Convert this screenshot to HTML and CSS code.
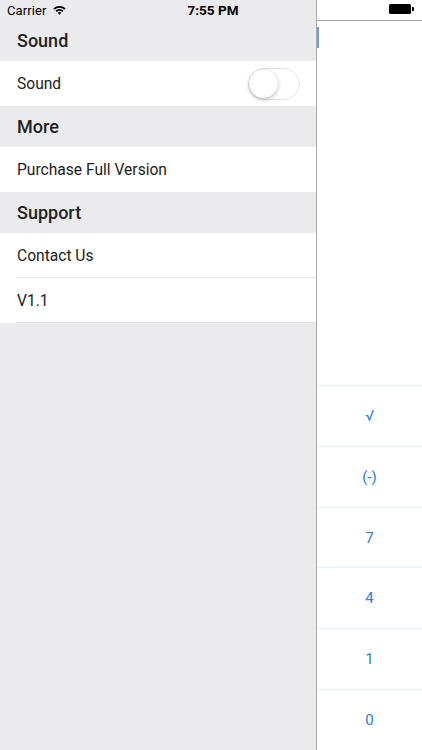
FILE: index.html
```html
<!DOCTYPE html>
<html>
<head>
<meta charset="utf-8">
<link rel="stylesheet" href="styles.css">
</head>
<body>
<div class="screen">
  <aside class="drawer">
    <div class="status-left">
      <span class="carrier">Carrier</span>
      <svg class="wifi" width="13" height="10" viewBox="0 0 13 10">
        <path d="M0.3 3.4 A9 9 0 0 1 12.7 3.4 L11.5 4.7 A7.3 7.3 0 0 0 1.5 4.7 Z" fill="#000"/>
        <path d="M2.5 5.6 A6 6 0 0 1 10.5 5.6 L9.3 6.9 A4.3 4.3 0 0 0 3.7 6.9 Z" fill="#000"/>
        <path d="M4.7 7.8 A2.9 2.9 0 0 1 8.3 7.8 L6.5 9.8 Z" fill="#000"/>
      </svg>
    </div>
    <div class="section-header">Sound</div>
    <div class="row">
      <span>Sound</span>
      <span class="toggle"><span class="knob"></span></span>
    </div>
    <div class="section-header">More</div>
    <div class="row"><span>Purchase Full Version</span></div>
    <div class="section-header">Support</div>
    <div class="row sep"><span>Contact Us</span></div>
    <div class="row sep"><span>V1.1</span></div>
  </aside>
  <main class="main">
    <div class="status-right">
      <span class="battery"><span class="nub"></span></span>
    </div>
    <div class="display"><span class="caret"></span></div>
    <div class="keys">
      <div class="key">√</div>
      <div class="key">(-)</div>
      <div class="key">7</div>
      <div class="key">4</div>
      <div class="key">1</div>
      <div class="key">0</div>
    </div>
  </main>
  <div class="time">7:55 PM</div>
</div>
</body>
</html>
```

FILE: styles.css
```css
* { box-sizing: border-box; }
html, body { margin: 0; padding: 0; }
body {
  width: 422px;
  height: 750px;
  overflow: hidden;
  font-family: Roboto, "Liberation Sans", sans-serif;
  color: #1c1c1e;
  background: #fff;
}
.screen {
  position: relative;
  display: flex;
  width: 422px;
  height: 750px;
}
.drawer {
  width: 317px;
  flex: none;
  background: #ebebed;
  border-right: 1px solid #a9a9a9;
  display: flex;
  flex-direction: column;
}
.status-left {
  height: 20px;
  display: flex;
  align-items: center;
  padding-left: 7px;
  gap: 6px;
  font-size: 13px;
  color: #000;
}
.carrier { letter-spacing: 0.1px; }
.wifi { margin-top: -1px; }
.section-header {
  height: 41px;
  display: flex;
  align-items: center;
  padding-left: 17px;
  font-size: 18px;
  font-weight: 500;
  color: #222;
  background: #ebebee;
}
.row {
  height: 45px;
  background: #fff;
  display: flex;
  align-items: center;
  justify-content: space-between;
  padding: 0 16px 0 17px;
  font-size: 15.6px;
  color: #222;
  position: relative;
}
.row.sep::after {
  content: "";
  position: absolute;
  left: 16px;
  right: 0;
  bottom: 0;
  height: 1px;
  background: #e4e4e6;
}
.toggle {
  width: 52px;
  height: 32px;
  border-radius: 16px;
  border: 1.5px solid #e3e3e3;
  background: #fff;
  display: flex;
  align-items: center;
  padding-left: 0;
}
.knob {
  width: 29px;
  height: 29px;
  border-radius: 50%;
  background: #fff;
  box-shadow: 0 2px 4px rgba(0,0,0,0.22), 0 0 1px rgba(0,0,0,0.25);
}
.main {
  flex: 1;
  display: flex;
  flex-direction: column;
  background: #fff;
}
.status-right {
  height: 21px;
  border-bottom: 1px solid #a0a0a0;
  display: flex;
  align-items: center;
  justify-content: flex-end;
  padding-right: 9px;
}
.battery {
  width: 22px;
  height: 10px;
  background: #000;
  border-radius: 1.5px;
  position: relative;
  margin-top: -2px;
  margin-right: 2px;
}
.nub {
  position: absolute;
  right: -2.5px;
  top: 3px;
  width: 1.5px;
  height: 4px;
  background: #000;
  border-radius: 0 1px 1px 0;
}
.display {
  height: 364px;
  padding-top: 6px;
}
.caret {
  display: block;
  width: 2px;
  height: 21px;
  background: #6e9fe3;
}
.keys {
  flex: 1;
  display: grid;
  grid-template-rows: repeat(6, 1fr);
}
.key {
  border-top: 1px solid #eaf0f8;
  display: flex;
  align-items: center;
  justify-content: center;
  font-size: 15px;
  color: #2e7ce0;
}
.time {
  position: absolute;
  top: 0;
  left: 0;
  right: 0;
  height: 20px;
  line-height: 20px;
  text-align: center;
  font-size: 13.5px;
  font-weight: 700;
  color: #000;
  padding-left: 4px;
}
```
